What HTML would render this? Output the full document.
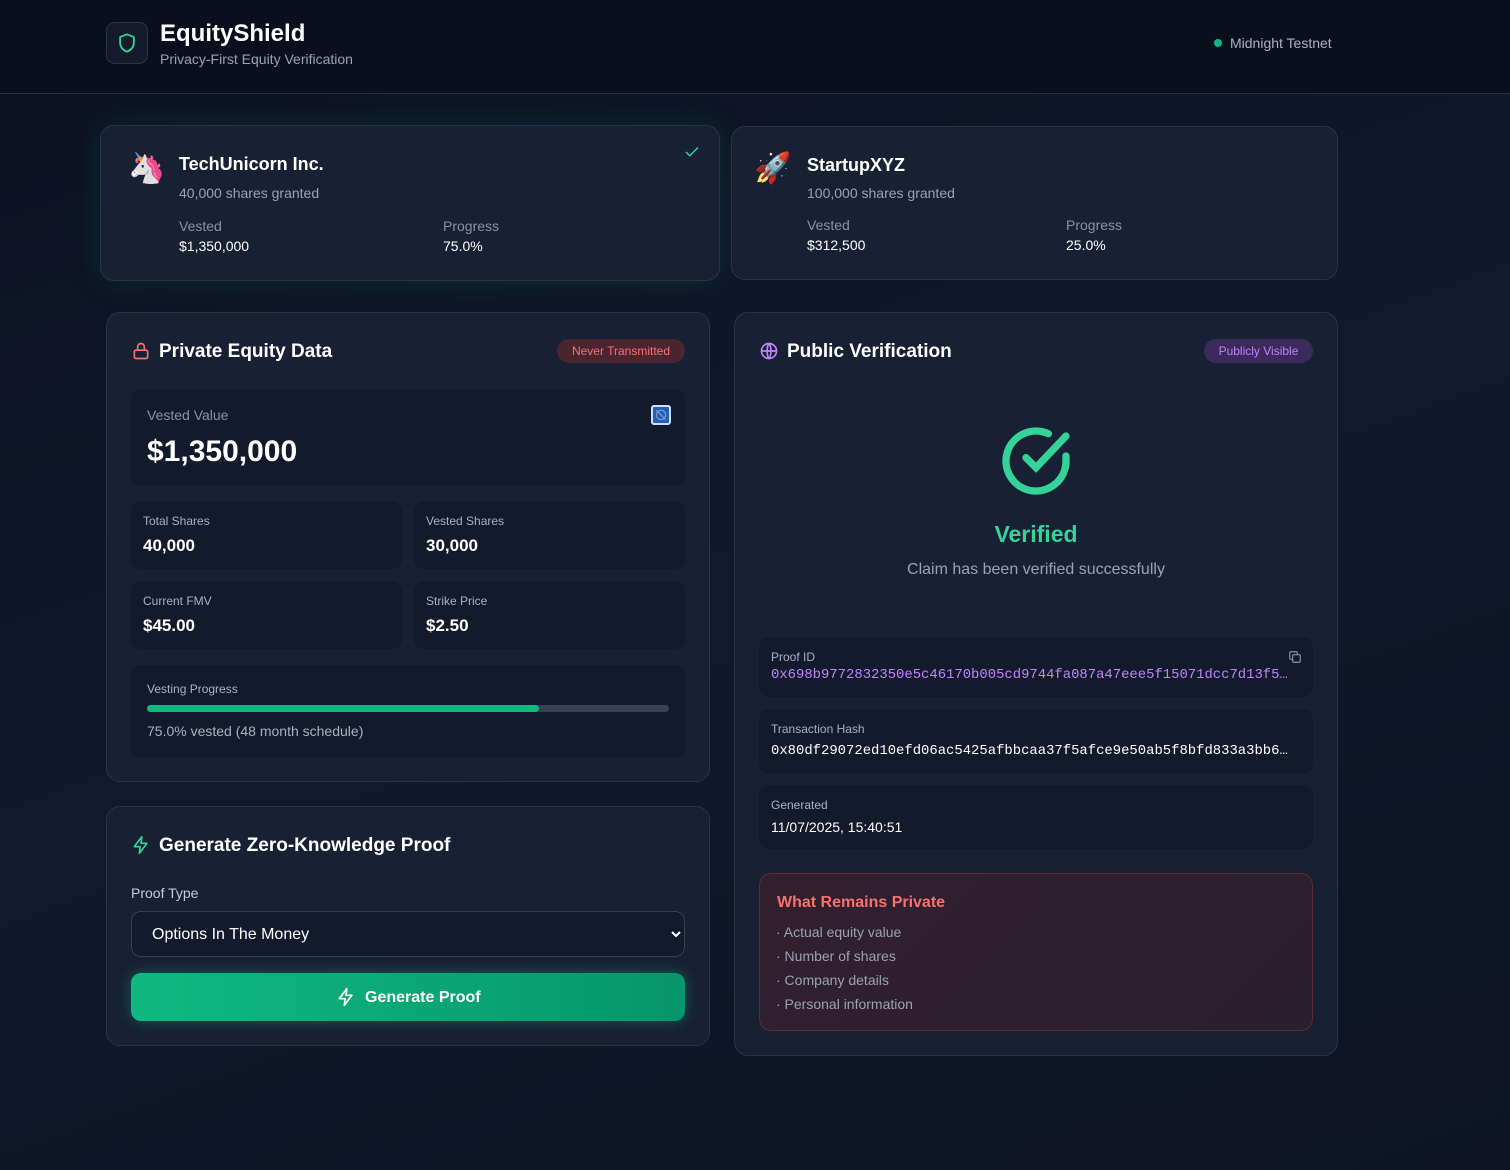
<!DOCTYPE html>
<html><head><meta charset="utf-8"><style>
*{box-sizing:border-box;margin:0;padding:0}
body{width:1510px;height:1170px;overflow:hidden;font-family:"Liberation Sans",sans-serif;color:#fff;background:linear-gradient(160deg,#0b1020 0%,#111a2c 50%,#0d1322 100%);position:relative}
.abs{position:absolute}
.hdr{left:0;top:0;width:1510px;height:94px;border-bottom:1px solid #263042;background:#0a0f1e}
.card{border:1px solid #2a3446;border-radius:14px;background:#182033}
.box{background:#131a2b;border-radius:10px}
.lbl{color:#8a93a6;font-size:14px}
.mono{font-family:"Liberation Mono",monospace;font-size:13.9px}
</style></head><body>
<div class="abs hdr"></div>
<div class="abs" style="left:106px;top:22px;width:42px;height:42px;border:1px solid #2c3547;border-radius:9px;background:#141b2b"></div>
<svg class="abs" style="left:116px;top:32px" width="22" height="22" viewBox="0 0 24 24" fill="none" stroke="#34d399" stroke-width="2" stroke-linejoin="round"><path d="M12 2.5l7.5 3v6c0 5-3.3 8.3-7.5 10-4.2-1.7-7.5-5-7.5-10v-6z"/></svg>
<div class="abs" style="left:160px;top:20px;font-size:24px;font-weight:bold">EquityShield</div>
<div class="abs" style="left:160px;top:51px;font-size:14px;color:#9aa3b5">Privacy-First Equity Verification</div>
<div class="abs" style="left:1214px;top:39px;width:8px;height:8px;border-radius:50%;background:#10b981"></div>
<div class="abs" style="left:1230px;top:35px;font-size:14px;color:#aab2c2">Midnight Testnet</div>

<div class="abs card" style="left:100px;top:125px;width:620px;height:156px;box-shadow:0 0 30px rgba(16,185,129,0.15)"></div>
<div class="abs" style="left:128px;top:152px;font-size:30px;line-height:34px">🦄</div>
<svg class="abs" style="left:683px;top:143px" width="18" height="18" viewBox="0 0 24 24" fill="none" stroke="#34d399" stroke-width="2"><path d="M4 12l5 5L20 6"/></svg>
<div class="abs" style="left:179px;top:154px;font-size:18px;font-weight:bold">TechUnicorn Inc.</div>
<div class="abs lbl" style="left:179px;top:185px;color:#9aa3b5">40,000 shares granted</div>
<div class="abs lbl" style="left:179px;top:218px">Vested</div>
<div class="abs" style="left:179px;top:238px;font-size:14px">$1,350,000</div>
<div class="abs lbl" style="left:443px;top:218px">Progress</div>
<div class="abs" style="left:443px;top:238px;font-size:14px">75.0%</div>

<div class="abs card" style="left:731px;top:126px;width:607px;height:154px"></div>
<div class="abs" style="left:754px;top:152px;font-size:30px;line-height:34px">🚀</div>
<div class="abs" style="left:807px;top:155px;font-size:18px;font-weight:bold">StartupXYZ</div>
<div class="abs lbl" style="left:807px;top:185px;color:#9aa3b5">100,000 shares granted</div>
<div class="abs lbl" style="left:807px;top:217px">Vested</div>
<div class="abs" style="left:807px;top:237px;font-size:14px">$312,500</div>
<div class="abs lbl" style="left:1066px;top:217px">Progress</div>
<div class="abs" style="left:1066px;top:237px;font-size:14px">25.0%</div>

<!-- private panel -->
<div class="abs card" style="left:106px;top:312px;width:604px;height:470px"></div>
<svg class="abs" style="left:131px;top:341px" width="20" height="20" viewBox="0 0 24 24" fill="none" stroke="#f87171" stroke-width="2"><rect x="4" y="11" width="16" height="10" rx="2"/><path d="M8 11V7a4 4 0 018 0v4"/></svg>
<div class="abs" style="left:159px;top:341px;font-size:19px;font-weight:bold">Private Equity Data</div>
<div class="abs" style="left:557px;top:339px;width:128px;height:24px;border-radius:12px;background:#4a2530;color:#f87171;font-size:12px;text-align:center;line-height:24px">Never Transmitted</div>
<div class="abs box" style="left:131px;top:389px;width:554px;height:96px"></div>
<div class="abs lbl" style="left:147px;top:407px">Vested Value</div>
<div class="abs" style="left:147px;top:435px;font-size:30px;font-weight:bold">$1,350,000</div>
<div class="abs" style="left:651px;top:405px;width:20px;height:20px;border:2px solid #cfe0ff;border-radius:3px;background:#1d5fc2"></div>
<svg class="abs" style="left:654px;top:408px" width="14" height="14" viewBox="0 0 24 24" fill="none" stroke="#8a9ab5" stroke-width="2"><circle cx="12" cy="12" r="8"/><path d="M4 4l16 16"/></svg>
<div class="abs box" style="left:131px;top:501px;width:271px;height:68px"></div>
<div class="abs box" style="left:414px;top:501px;width:271px;height:68px"></div>
<div class="abs box" style="left:131px;top:581px;width:271px;height:68px"></div>
<div class="abs box" style="left:414px;top:581px;width:271px;height:68px"></div>
<div class="abs" style="left:143px;top:514px;font-size:12px;color:#aab2c2">Total Shares</div>
<div class="abs" style="left:143px;top:536px;font-size:17px;font-weight:bold">40,000</div>
<div class="abs" style="left:426px;top:514px;font-size:12px;color:#aab2c2">Vested Shares</div>
<div class="abs" style="left:426px;top:536px;font-size:17px;font-weight:bold">30,000</div>
<div class="abs" style="left:143px;top:594px;font-size:12px;color:#aab2c2">Current FMV</div>
<div class="abs" style="left:143px;top:616px;font-size:17px;font-weight:bold">$45.00</div>
<div class="abs" style="left:426px;top:594px;font-size:12px;color:#aab2c2">Strike Price</div>
<div class="abs" style="left:426px;top:616px;font-size:17px;font-weight:bold">$2.50</div>
<div class="abs box" style="left:131px;top:665px;width:554px;height:92px"></div>
<div class="abs" style="left:147px;top:682px;font-size:12px;color:#aab2c2">Vesting Progress</div>
<div class="abs" style="left:147px;top:705px;width:522px;height:7px;border-radius:4px;background:#374151"></div>
<div class="abs" style="left:147px;top:705px;width:392px;height:7px;border-radius:4px;background:#10b981"></div>
<div class="abs" style="left:147px;top:723px;font-size:14px;color:#aab2c2">75.0% vested (48 month schedule)</div>

<!-- generate -->
<div class="abs card" style="left:106px;top:806px;width:604px;height:240px"></div>
<svg class="abs" style="left:131px;top:835px" width="20" height="20" viewBox="0 0 24 24" fill="none" stroke="#34d399" stroke-width="2" stroke-linejoin="round"><path d="M13 2L4 14h7l-1 8 9-12h-7z"/></svg>
<div class="abs" style="left:159px;top:835px;font-size:19px;font-weight:bold">Generate Zero-Knowledge Proof</div>
<div class="abs" style="left:131px;top:885px;font-size:14px;color:#c5ccd8">Proof Type</div>
<div class="abs" style="left:131px;top:911px;width:554px;height:46px;border:1px solid #364152;border-radius:10px;background:#131a2b"></div>
<div class="abs" style="left:152px;top:926px;font-size:16px">Options In The Money</div>
<svg class="abs" style="left:670px;top:929px" width="12" height="10" viewBox="0 0 12 10" fill="none" stroke="#fff" stroke-width="2"><path d="M2 3l4 4 4-4"/></svg>
<div class="abs" style="left:131px;top:973px;width:554px;height:48px;border-radius:10px;background:linear-gradient(90deg,#10b981,#059669);box-shadow:0 0 14px rgba(16,185,129,0.4)"></div>
<svg class="abs" style="left:336px;top:987px" width="20" height="20" viewBox="0 0 24 24" fill="none" stroke="#fff" stroke-width="2" stroke-linejoin="round"><path d="M13 2L4 14h7l-1 8 9-12h-7z"/></svg>
<div class="abs" style="left:365px;top:989px;font-size:16px;font-weight:bold">Generate Proof</div>

<!-- public panel -->
<div class="abs card" style="left:734px;top:312px;width:604px;height:744px"></div>
<svg class="abs" style="left:759px;top:341px" width="20" height="20" viewBox="0 0 24 24" fill="none" stroke="#c084fc" stroke-width="2"><circle cx="12" cy="12" r="9"/><path d="M3 12h18M12 3c3 3 3 15 0 18M12 3c-3 3-3 15 0 18"/></svg>
<div class="abs" style="left:787px;top:341px;font-size:19px;font-weight:bold">Public Verification</div>
<div class="abs" style="left:1204px;top:339px;width:109px;height:24px;border-radius:12px;background:#3b2a5c;color:#c084fc;font-size:12px;text-align:center;line-height:24px">Publicly Visible</div>
<svg class="abs" style="left:996px;top:421px" width="80" height="80" viewBox="0 0 24 24" fill="none" stroke="#34d399" stroke-width="2.2" stroke-linecap="round"><path d="M21 10.5V12a9 9 0 11-5.3-8.2"/><path d="M9 11l3 3 9-9.5"/></svg>
<div class="abs" style="left:734px;top:521px;width:604px;text-align:center;font-size:23px;font-weight:bold;color:#34d399">Verified</div>
<div class="abs" style="left:734px;top:561px;width:604px;text-align:center;font-size:16px;color:#9aa3b5">Claim has been verified successfully</div>
<div class="abs box" style="left:759px;top:637px;width:554px;height:60px"></div>
<div class="abs" style="left:771px;top:650px;font-size:12px;color:#aab2c2">Proof ID</div>
<div class="abs mono" style="left:771px;top:667px;color:#c084fc">0x698b9772832350e5c46170b005cd9744fa087a47eee5f15071dcc7d13f5…</div>
<svg class="abs" style="left:1288px;top:650px" width="14" height="14" viewBox="0 0 24 24" fill="none" stroke="#8a93a6" stroke-width="2"><rect x="8" y="8" width="13" height="13" rx="2"/><path d="M16 8V5a2 2 0 00-2-2H5a2 2 0 00-2 2v9a2 2 0 002 2h3"/></svg>
<div class="abs box" style="left:759px;top:709px;width:554px;height:64px"></div>
<div class="abs" style="left:771px;top:722px;font-size:12px;color:#aab2c2">Transaction Hash</div>
<div class="abs mono" style="left:771px;top:743px">0x80df29072ed10efd06ac5425afbbcaa37f5afce9e50ab5f8bfd833a3bb6…</div>
<div class="abs box" style="left:759px;top:785px;width:554px;height:64px"></div>
<div class="abs" style="left:771px;top:798px;font-size:12px;color:#aab2c2">Generated</div>
<div class="abs" style="left:771px;top:819px;font-size:14px">11/07/2025, 15:40:51</div>
<div class="abs" style="left:759px;top:873px;width:554px;height:158px;border:1px solid #5a2a35;border-radius:12px;background:linear-gradient(135deg,#321f2e,#2a1f2e)"></div>
<div class="abs" style="left:777px;top:894px;font-size:16px;font-weight:bold;color:#f87171">What Remains Private</div>
<div class="abs" style="left:776px;top:920px;font-size:14px;color:#9aa3b5;line-height:24px">· Actual equity value<br>· Number of shares<br>· Company details<br>· Personal information</div>
</body></html>
